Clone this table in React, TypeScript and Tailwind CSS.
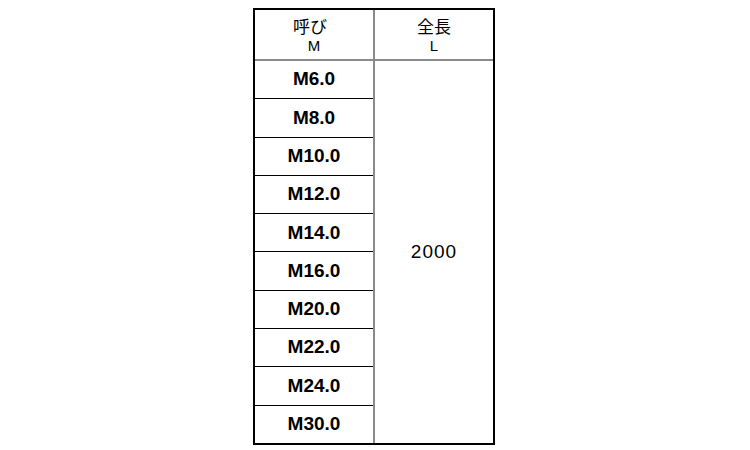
import React from "react";

const sizes = ["M6.0", "M8.0", "M10.0", "M12.0", "M14.0", "M16.0", "M20.0", "M22.0", "M24.0", "M30.0"];

export default function App() {
  return (
    <div
      className="w-[750px] h-[450px] bg-white text-black"
      style={{ fontFamily: '"Liberation Sans", "Noto Sans CJK JP", sans-serif' }}
    >
      <div className="pl-[253px] pt-[8px]">
        <div className="w-[242px] border-2 border-black flex flex-col">
          <div className="flex h-[51px] border-b-2 border-[#8a8a8a]">
            <div className="w-[120px] border-r-2 border-[#8a8a8a] flex flex-col items-center pt-[6px]">
              <div className="text-[17px] leading-[20px] pr-[8px]" style={{ fontFamily: '"Noto Sans CJK JP", sans-serif' }}>呼び</div>
              <div className="text-[15px] leading-[18px] mt-[1px]">M</div>
            </div>
            <div className="flex-1 flex flex-col items-center pt-[6px]">
              <div className="text-[17px] leading-[20px]" style={{ fontFamily: '"Noto Sans CJK JP", sans-serif' }}>全長</div>
              <div className="text-[15px] leading-[18px] mt-[1px]">L</div>
            </div>
          </div>
          <div className="flex h-[382px]">
            <div className="w-[120px] border-r-2 border-[#8a8a8a] flex flex-col">
              {sizes.map((s, i) => (
                <div
                  key={s}
                  className={
                    i < sizes.length - 1
                      ? "flex-1 flex items-center justify-center border-b border-black font-bold text-[19px]"
                      : "flex-1 flex items-center justify-center font-bold text-[19px]"
                  }
                >
                  {s}
                </div>
              ))}
            </div>
            <div className="flex-1 flex items-center justify-center text-[19px] tracking-[1px]">2000</div>
          </div>
        </div>
      </div>
    </div>
  );
}
